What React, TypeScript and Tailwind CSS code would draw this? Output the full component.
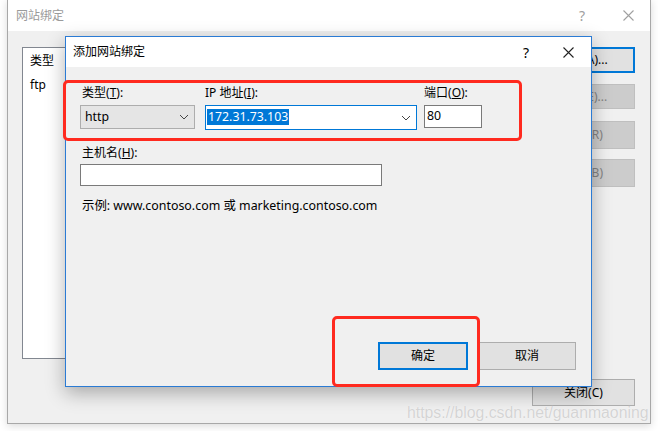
import React from 'react';

const font = { fontFamily: '"Noto Sans", "Noto Sans CJK SC", sans-serif' };

const Chevron: React.FC = () => (
  <svg width="10" height="6" viewBox="0 0 10 6" className="shrink-0">
    <path d="M1 1 L5 5 L9 1" fill="none" stroke="#444" strokeWidth="1" />
  </svg>
);

const CloseX: React.FC<{ color: string }> = ({ color }) => (
  <svg width="11" height="11" viewBox="0 0 11 11">
    <path d="M0.5 0.5 L10.5 10.5 M10.5 0.5 L0.5 10.5" stroke={color} strokeWidth="1.1" fill="none" />
  </svg>
);

const Label: React.FC<{ text: string; k: string }> = ({ text, k }) => (
  <div className="h-4 leading-4 text-[12px] text-black">
    {text}(<span className="underline">{k}</span>):
  </div>
);

const BgButton: React.FC<{ label: string; active?: boolean; disabled?: boolean; className?: string }> = ({
  label,
  active,
  disabled,
  className = '',
}) => (
  <div
    className={`w-[103px] flex items-center justify-center text-[12px] ${
      active ? 'border-2 border-[#0078d7] bg-[#e1e1e1]' : disabled ? 'border border-[#bfbfbf] bg-[#cccccc] text-[#838383]' : 'border border-[#adadad] bg-[#e1e1e1]'
    } ${className}`}
  >
    {label}
  </div>
);

export default function App() {
  return (
    <div className="relative w-[658px] h-[431px] bg-white overflow-hidden" style={font}>
      {/* background window */}
      <div className="absolute left-[7px] top-[-1px] w-[644px] h-[425px] border border-[#a8a8a8] bg-[#f0f0f0] flex flex-col shadow-[0_2px_8px_rgba(0,0,0,0.15)]">
        <div className="h-[31px] shrink-0 bg-white flex items-center pl-[8px] pr-[16px] text-[12px] text-[#9a9a9a]">
          <span>网站绑定</span>
          <span className="ml-auto mr-[38px] text-[14px] text-[#a0a0a0]">?</span>
          <CloseX color="#a0a0a0" />
        </div>
        <div className="flex flex-1 pl-[14px] pt-[16px] pr-[15px] pb-[17px]">
          <div className="w-[480px] h-[312px] border border-[#828790] bg-white text-[12px] text-black pl-[7px] pt-[1px]">
            <div className="h-[24px] leading-[24px]">类型</div>
            <div className="h-[24px] leading-[24px]">ftp</div>
          </div>
          <div className="ml-auto flex flex-col">
            <BgButton label="添加(A)..." active className="h-[26px]" />
            <BgButton label="编辑(E)..." disabled className="h-[25px] mt-[11px]" />
            <BgButton label="删除(R)" disabled className="h-[28px] mt-[12px]" />
            <BgButton label="浏览(B)" disabled className="h-[28px] mt-[10px]" />
            <BgButton label="关闭(C)" className="h-[27px] mt-auto" />
          </div>
        </div>
      </div>

      {/* dialog */}
      <div className="absolute left-[65px] top-[36px] w-[527px] h-[351px] border border-[#2b7bd4] bg-[#f0f0f0] flex flex-col shadow-[0_6px_18px_rgba(0,0,0,0.3)]">
        <div className="h-[30px] shrink-0 bg-white flex items-center pl-[7px] pr-[17px] text-[12px] text-black">
          <span>添加网站绑定</span>
          <span className="ml-auto mr-[34px] text-[14px]">?</span>
          <CloseX color="#222" />
        </div>
        <div className="flex-1 flex flex-col pl-[14px] pr-[15px] pt-[18px] pb-[16px] text-[12.3px]">
          <div className="flex">
            <div className="w-[115px] flex flex-col">
              <div className="pl-[2px]"><Label text="类型" k="T" /></div>
              <div className="mt-[4px] h-[24px] border border-[#adadad] bg-[#e5e5e5] flex items-center pl-[4px] pr-[5px]">
                <span className="flex-1">http</span>
                <Chevron />
              </div>
            </div>
            <div className="ml-[10px] w-[212px] flex flex-col">
              <Label text="IP 地址" k="I" />
              <div className="mt-[4px] h-[25px] border border-[#0078d7] bg-white flex items-center pl-[1px] pr-[5px]">
                <span className="flex-1">
                  <span className="bg-[#0078d7] text-white px-[1px] leading-[16px] inline-block">172.31.73.103</span>
                </span>
                <Chevron />
              </div>
            </div>
            <div className="ml-[7px] w-[58px] flex flex-col">
              <Label text="端口" k="O" />
              <div className="mt-[4px] h-[23px] border border-[#7a7a7a] bg-white flex items-center pl-[2px]">80</div>
            </div>
          </div>
          <div className="mt-[15px] pl-[2px]"><Label text="主机名" k="H" /></div>
          <div className="mt-[3px] w-[302px] h-[22px] border border-[#7a7a7a] bg-white" />
          <div className="mt-[11px] pl-[2px] text-black text-[12.4px]">示例: www.contoso.com 或 marketing.contoso.com</div>
          <div className="mt-auto flex justify-end gap-[10px] text-[12px]">
            <div className="w-[90px] h-[28px] border-2 border-[#0078d7] bg-[#e1e1e1] flex items-center justify-center">确定</div>
            <div className="w-[98px] h-[28px] border border-[#adadad] bg-[#e1e1e1] flex items-center justify-center">取消</div>
          </div>
        </div>
      </div>

      {/* annotations */}
      <div className="absolute left-[63px] top-[80px] w-[459px] h-[61px] rounded-[5px] border-[3px] border-[#ff2a1f]" />
      <div className="absolute left-[332px] top-[316px] w-[148px] h-[71px] rounded-[5px] border-[3px] border-[#ff2a1f]" />

      {/* watermark */}
      <div
        className="absolute left-[407px] top-[403px] text-[15.8px] leading-[20px] text-[#d4d4d4] whitespace-nowrap"
        style={{ fontFamily: '"Liberation Sans", Arial, sans-serif', textShadow: '0 0 1px #ffffff' }}
      >
        https://blog.csdn.net/guanmaoning
      </div>
    </div>
  );
}
